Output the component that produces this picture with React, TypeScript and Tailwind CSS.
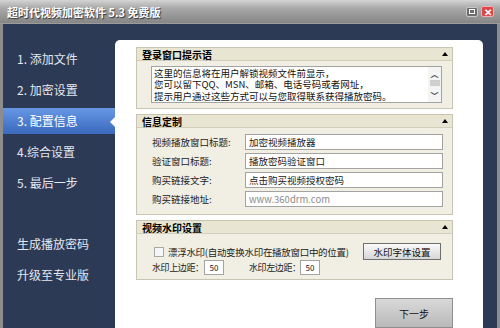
import React from "react"

const cjk = { fontFamily: '"Noto Sans CJK SC", "Noto Sans", sans-serif' }

function Caret() {
  return <span className="ml-auto mr-[4px] h-0 w-0 border-x-[3px] border-b-[4px] border-x-transparent border-b-black" />
}

function Group({ title, children, className = "" }: { title: string; children: React.ReactNode; className?: string }) {
  return (
    <div className={"border border-[#c9c5b3] bg-[#f1efe4] " + className}>
      <div className="flex h-[13px] items-center border-b border-[#d3cfbd] bg-[#e8e5d3] pl-[5px] text-[10px] font-bold leading-[13px] text-black">
        <span>{title}</span>
        <Caret />
      </div>
      {children}
    </div>
  )
}

function Field({ label, value, muted }: { label: string; value: string; muted?: boolean }) {
  return (
    <div className="flex h-[16px] items-center">
      <span className="w-[93px] whitespace-nowrap text-[9.5px] leading-[16px] text-[#222]">{label}</span>
      <div className={"flex h-[16px] flex-1 items-center border border-[#a3a3a3] bg-white pl-[3px] text-[9.5px] leading-[14px] " + (muted ? "text-[#8c8c8c]" : "text-[#222]")}>
        {value}
      </div>
    </div>
  )
}

const menu = ["1. 添加文件", "2. 加密设置", "3. 配置信息", "4.综合设置", "5. 最后一步"]

export default function App() {
  return (
    <div className="flex h-[328px] w-[500px] flex-col overflow-hidden bg-[#8d8d8d]" style={cjk}>
      <div className="flex h-[26px] items-center bg-[linear-gradient(180deg,#d4d4d4,#a9a9a9_35%,#868686)] pl-[7px] pr-[6px] border-b border-[#9c9c9c]">
        <span className="text-[11px] font-bold leading-[14px] text-white [text-shadow:1px_1px_1px_#333]">超时代视频加密软件 5.3 免费版</span>
        <div className="ml-auto flex items-center gap-[3px]">
          <div className="flex h-[10px] w-[12px] items-center justify-center rounded-[2px] border border-[#c8c8c8] bg-[#6e6e6e]">
            <div className="h-[5px] w-[6px] border border-white" />
          </div>
          <div className="flex h-[11px] w-[13px] items-center justify-center rounded-[2px] border border-[#f0b0b0] bg-[#d9474b] text-[10px] font-bold leading-none text-white">✕</div>
        </div>
      </div>

      <div className="flex flex-1 pl-[3px] pr-[3px]">
        <div className="flex flex-1 bg-[#2d3a56]">
          <div className="flex w-[112px] flex-col pt-[22px] text-[12px] text-[#e3e7f0]">
            {menu.map((m, i) => (
              <div
                key={m}
                className={"relative mb-[5px] flex h-[26px] items-center pl-[14px] leading-[26px] " + (i === 2 ? "bg-[linear-gradient(180deg,#6797e4,#3a69bd)] text-white" : "")}
              >
                {m}
                {i === 2 && <span className="absolute right-0 top-[9px] h-0 w-0 border-y-[5px] border-r-[5px] border-y-transparent border-r-white" />}
              </div>
            ))}
            <div className="mt-[30px] flex h-[26px] items-center pl-[14px]">生成播放密码</div>
            <div className="mt-[5px] flex h-[26px] items-center pl-[14px]">升级至专业版</div>
          </div>

          <div className="mt-[16px] mr-[14px] flex flex-1 flex-col rounded-t-[5px] bg-white pl-[21px] pr-[30px] pt-[7px]">
            <Group title="登录窗口提示语">
              <div className="px-[14px] pb-[5px] pt-[5px] pr-[10px]">
                <div className="flex h-[37px] border border-[#a3a3a3] bg-white">
                  <div className="flex-1 whitespace-nowrap pl-[2px] pt-[0.5px] text-[9.5px] leading-[11.5px] text-[#111]">
                    <div>这里的信息将在用户解锁视频文件前显示，</div>
                    <div>您可以留下QQ、MSN、邮箱、电话号码或者网址，</div>
                    <div>提示用户通过这些方式可以与您取得联系获得播放密码。</div>
                  </div>
                  <div className="flex w-[13px] flex-col items-center bg-[#f4f4f4] text-[8px] leading-[9px] text-[#333]">
                    <span className="mt-[2px] font-bold">︿</span>
                    <span className="mt-[2px] h-[6px] w-[10px] bg-[#cfcfcf]" />
                    <span className="mt-auto mb-[2px] font-bold">﹀</span>
                  </div>
                </div>
              </div>
            </Group>

            <Group title="信息定制" className="mt-[5px]">
              <div className="flex flex-col gap-[3px] pb-[7px] pl-[15px] pr-[9px] pt-[6px]">
                <Field label="视频播放窗口标题:" value="加密视频播放器" />
                <Field label="验证窗口标题:" value="播放密码验证窗口" />
                <Field label="购买链接文字:" value="点击购买视频授权密码" />
                <Field label="购买链接地址:" value="www.360drm.com" muted />
              </div>
            </Group>

            <Group title="视频水印设置" className="mt-[5px]">
              <div className="pb-[4px] pl-[15px] pr-[11px] pt-[9px] text-[9px] text-[#222]">
                <div className="flex h-[17px] items-center">
                  <span className="ml-[2px] h-[10px] w-[10px] shrink-0 border border-[#a8a8a8] bg-[#f6f6f6]" />
                  <span className="ml-[4px] whitespace-nowrap text-[9.5px] leading-[14px] tracking-[-0.3px]">漂浮水印(自动变换水印在播放窗口中的位置)</span>
                  <div className="ml-auto flex h-[17px] w-[78px] shrink-0 items-center justify-center border border-[#6f6f6f] bg-[linear-gradient(180deg,#fafafa,#d6d6d6)] text-[9.5px] leading-[14px] text-[#111]">水印字体设置</div>
                </div>
                <div className="flex h-[15px] items-center">
                  <span className="w-[52px] whitespace-nowrap leading-[14px] tracking-[-0.4px]">水印上边距：</span>
                  <div className="flex h-[15px] w-[20px] items-center justify-center border border-[#a3a3a3] bg-white text-[8px] leading-none">50</div>
                  <span className="ml-[25px] w-[51px] whitespace-nowrap leading-[14px] tracking-[-0.4px]">水印左边距：</span>
                  <div className="flex h-[15px] w-[20px] items-center justify-center border border-[#a3a3a3] bg-white text-[8px] leading-none">50</div>
                </div>
              </div>
            </Group>

            <div className="mt-[18px] flex justify-end">
              <div className="flex h-[30px] w-[78px] items-center justify-center border border-[#8e8e8e] bg-[linear-gradient(180deg,#d9d9d9,#b9b9b9)] text-[10px] text-[#111]">下一步</div>
            </div>
          </div>
        </div>
      </div>
    </div>
  )
}
